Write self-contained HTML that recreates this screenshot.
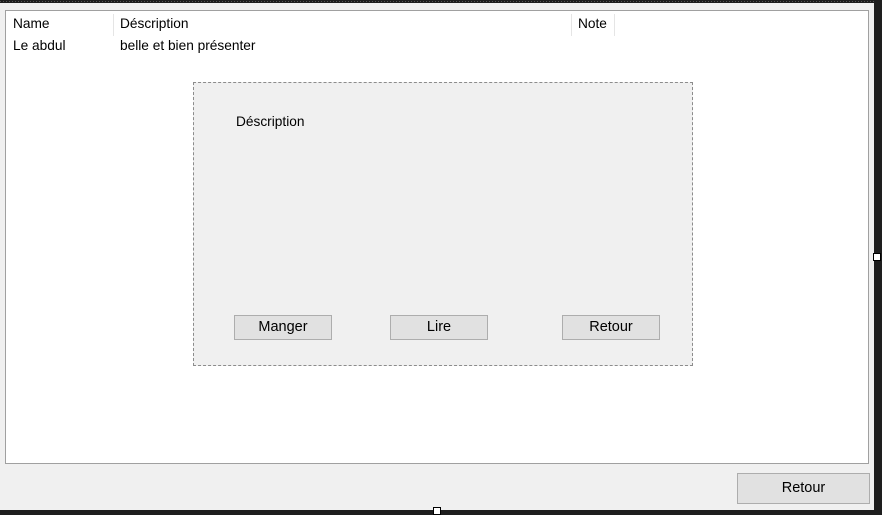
<!DOCTYPE html>
<html><head><style>
*{margin:0;padding:0;box-sizing:border-box}
body{width:882px;height:514px;background:#1e1e1e;position:relative;overflow:hidden;font-family:"Liberation Sans",Arial,sans-serif;font-size:13.7px;color:#000}
.form{position:absolute;left:0;top:3px;width:874px;height:507px;background:#f0f0f0}
.dots{position:absolute;background-image:linear-gradient(90deg,#555 1px,transparent 1px);background-size:3px 1px}
.lv{position:absolute;left:5px;top:10px;width:864px;height:454px;background:#fff;border:1px solid #a0a0a0}
.t{position:absolute;white-space:nowrap}
.sep{position:absolute;top:3px;width:1px;height:22px;background:#e5e5e5}
.panel{position:absolute;left:193px;top:82px;width:500px;height:284px;background:#f0f0f0;border:1px dashed #8c8c8c}
.btn{position:absolute;height:25px;background:#e1e1e1;border:1px solid #adadad;text-align:center;line-height:23px;font-size:14.5px}
.h{position:absolute;width:8px;height:8px;background:#fff;border:1px solid #000}
</style></head><body>
<div class="form"></div>
<div class="dots" style="left:0;top:1px;width:874px;height:1px"></div>
<div class="lv">
 <div class="t" style="left:7px;top:5px">Name</div>
 <div class="sep" style="left:107px"></div>
 <div class="t" style="left:114px;top:5px">Déscription</div>
 <div class="sep" style="left:565px"></div>
 <div class="t" style="left:572px;top:5px">Note</div>
 <div class="sep" style="left:608px"></div>
 <div class="t" style="left:7px;top:27px">Le abdul</div>
 <div class="t" style="left:114px;top:27px">belle et bien présenter</div>
</div>
<div class="panel">
 <div class="t" style="left:42px;top:31px">Déscription</div>
</div>
<div class="btn" style="left:234px;top:315px;width:98px">Manger</div>
<div class="btn" style="left:390px;top:315px;width:98px">Lire</div>
<div class="btn" style="left:562px;top:315px;width:98px">Retour</div>
<div class="btn" style="left:737px;top:473px;width:133px;height:31px;line-height:29px">Retour</div>
<div class="h" style="left:873px;top:253px"></div>
<div class="h" style="left:433px;top:507px"></div>
</body></html>
